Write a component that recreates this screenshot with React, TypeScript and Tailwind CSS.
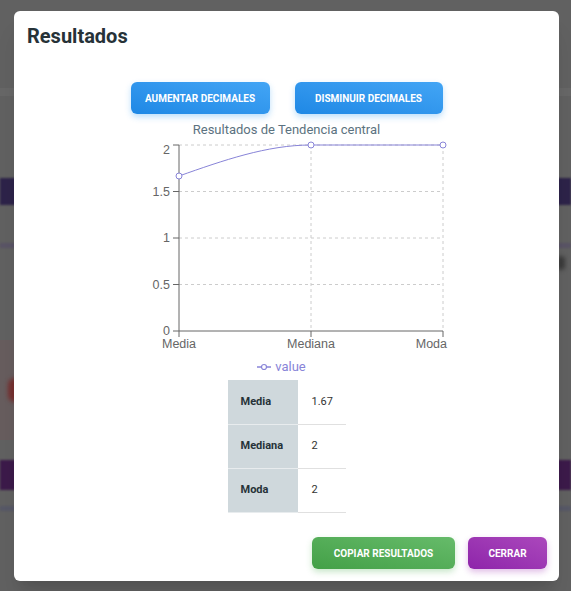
import React from 'react'

const rows = [
  { label: 'Media', value: '1.67' },
  { label: 'Mediana', value: '2' },
  { label: 'Moda', value: '2' },
]

function Backdrop() {
  return (
    <div className="flex h-[591px] w-full flex-col bg-[#616161]">
      <div className="h-[88px]" />
      <div className="h-[8px] bg-[#676767]" />
      <div className="h-[82px]" />
      <div className="h-[27px] bg-[#2d2349] blur-[1px]" />
      <div className="h-[38px]" />
      <div className="h-[5px] bg-[#5a5466] blur-[1px]" />
      <div className="flex h-[92px] justify-end">
        <div className="mr-[6px] mt-[8px] h-[14px] w-[8px] rounded-full bg-[#3a3a3a] blur-[2px]" />
      </div>
      <div className="flex h-[100px]">
        <div className="flex w-1/2 items-center bg-[#675d5e]">
          <div className="ml-[8px] h-[24px] w-[14px] rounded-full bg-[#763030] blur-[2px]" />
        </div>
        <div className="w-1/2" />
      </div>
      <div className="h-[20px]" />
      <div className="h-[30px] bg-[#3c1a4a] blur-[1px]" />
      <div className="h-[16px]" />
      <div className="h-[5px] bg-[#575867] blur-[1px]" />
    </div>
  )
}

function Chart() {
  const yTicks = [
    { v: '2', y: 7, ly: 12 },
    { v: '1.5', y: 53.5, ly: 53.5 },
    { v: '1', y: 100, ly: 100 },
    { v: '0.5', y: 146.5, ly: 146.5 },
    { v: '0', y: 193, ly: 193 },
  ]
  const xs = [53, 185, 317]
  return (
    <svg width="322" height="218" className="block" style={{ fontFamily: '"Liberation Sans", Arial, sans-serif' }}>
      {[7, 53.5, 100, 146.5].map((y) => (
        <line key={y} x1={53} x2={317} y1={y} y2={y} stroke="#ccc" strokeDasharray="3 3" />
      ))}
      {[185, 317].map((x) => (
        <line key={x} x1={x} x2={x} y1={7} y2={193} stroke="#ccc" strokeDasharray="3 3" />
      ))}
      <line x1={53} x2={53} y1={7} y2={193} stroke="#666" />
      <line x1={53} x2={317} y1={193} y2={193} stroke="#666" />
      {yTicks.map((t) => (
        <g key={t.v}>
          <line x1={47} x2={53} y1={t.y} y2={t.y} stroke="#666" />
          <text x={44} y={t.ly} dy="0.355em" textAnchor="end" fontSize="12.5" fill="#666">
            {t.v}
          </text>
        </g>
      ))}
      {xs.map((x) => (
        <line key={x} x1={x} x2={x} y1={193} y2={199} stroke="#666" />
      ))}
      <text x={53} y={209.5} textAnchor="middle" fontSize="12.5" fill="#666">Media</text>
      <text x={185} y={209.5} textAnchor="middle" fontSize="12.5" fill="#666">Mediana</text>
      <text x={321} y={209.5} textAnchor="end" fontSize="12.5" fill="#666">Moda</text>
      <path d="M53,38 C97,22.5 141,7 185,7 L317,7" fill="none" stroke="#8884d8" strokeWidth="1" />
      {[
        [53, 38],
        [185, 7],
        [317, 7],
      ].map(([x, y]) => (
        <circle key={x} cx={x} cy={y} r={3} fill="#fff" stroke="#8884d8" />
      ))}
    </svg>
  )
}

export default function App() {
  return (
    <div className="relative h-[591px] w-[571px] overflow-hidden" style={{ fontFamily: 'Roboto, "Liberation Sans", sans-serif' }}>
      <Backdrop />
      <div className="absolute left-[14px] top-[11px] flex h-[570px] w-[545px] flex-col rounded-[6px] bg-white shadow-xl">
        <h2 className="pl-[13px] pt-[9px] text-[20px] font-bold leading-8 text-[#263238]">Resultados</h2>

        <div className="mt-[30px] flex justify-center gap-[25px]">
          <button className="h-[32px] w-[139px] rounded-[6px] bg-gradient-to-tr from-[#1e88e5] to-[#42a5f5] text-[10px] font-bold text-white shadow-[0_3px_6px_rgba(33,150,243,0.3)]">
            AUMENTAR DECIMALES
          </button>
          <button className="h-[32px] w-[148px] rounded-[6px] bg-gradient-to-tr from-[#1e88e5] to-[#42a5f5] text-[10px] font-bold text-white shadow-[0_3px_6px_rgba(33,150,243,0.3)]">
            DISMINUIR DECIMALES
          </button>
        </div>

        <div className="mt-[8px] h-[16px] text-center text-[13px] leading-4 text-[#5b7280]">
          Resultados de Tendencia central
        </div>

        <div className="flex justify-center">
          <Chart />
        </div>

        <div className="mt-[3px] flex h-[16px] items-center justify-center pr-[10px] text-[13px] text-[#8884d8]">
          <svg width="14" height="8" className="mr-[4px]">
            <line x1="0" x2="14" y1="4" y2="4" stroke="#8884d8" strokeWidth="1.5" />
            <circle cx="7" cy="4" r="2.5" fill="#fff" stroke="#8884d8" strokeWidth="1.2" />
          </svg>
          value
        </div>

        <div className="mt-[5px] flex justify-center">
          <table className="w-[118px] border-collapse text-[11px]">
            <tbody>
              {rows.map((r) => (
                <tr key={r.label} className="h-[44px]">
                  <td className="w-[70px] border-b border-[#e8ecee] bg-[#cfd8dc] pl-[13px] font-bold text-[#263238]">{r.label}</td>
                  <td className="border-b border-[#e0e0e0] pl-[14px] text-[#333]">{r.value}</td>
                </tr>
              ))}
            </tbody>
          </table>
        </div>

        <div className="mt-auto flex justify-end gap-[13px] pb-[12px] pr-[12px]">
          <button className="h-[32px] w-[143px] rounded-[6px] bg-gradient-to-tr from-[#43a047] to-[#66bb6a] text-[10px] font-bold text-white shadow-[0_3px_6px_rgba(76,175,80,0.3)]">
            COPIAR RESULTADOS
          </button>
          <button className="h-[32px] w-[79px] rounded-[6px] bg-gradient-to-tr from-[#8e24aa] to-[#ab47bc] text-[10px] font-bold text-white shadow-[0_3px_6px_rgba(156,39,176,0.3)]">
            CERRAR
          </button>
        </div>
      </div>
    </div>
  )
}
